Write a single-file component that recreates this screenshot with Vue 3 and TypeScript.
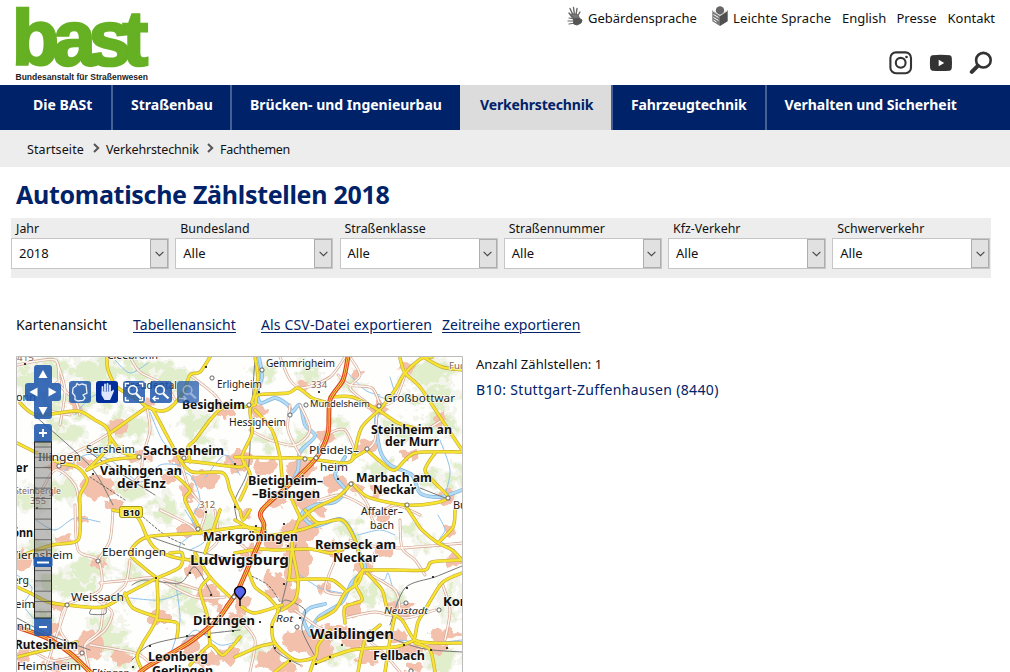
<script setup lang="ts">
type Pt = [number, number]
interface Label { t: string; x: number; y: number; w: number; s: number; b?: boolean; c?: string; i?: boolean }
interface Blob { x: number; y: number; rx: number; ry: number }

const nav = [
  { t: 'Die BASt', c: 'n1' },
  { t: 'Straßenbau', c: 'n2' },
  { t: 'Brücken- und Ingenieurbau', c: 'n3' },
  { t: 'Verkehrstechnik', c: 'n4' },
  { t: 'Fahrzeugtechnik', c: 'n5' },
  { t: 'Verhalten und Sicherheit', c: 'n6' },
]
const filters = [
  { l: 'Jahr', v: '2018' },
  { l: 'Bundesland', v: 'Alle' },
  { l: 'Straßenklasse', v: 'Alle' },
  { l: 'Straßennummer', v: 'Alle' },
  { l: 'Kfz-Verkehr', v: 'Alle' },
  { l: 'Schwerverkehr', v: 'Alle' },
]

// Smooth open curve through a list of "x,y" pairs
function curve(src: string): string {
  const p: Pt[] = src.split(' ').map((s) => s.split(',').map(Number) as Pt)
  let d = `M${p[0][0]},${p[0][1]}`
  for (let i = 0; i < p.length - 1; i++) {
    const a = p[Math.max(0, i - 1)], b = p[i], c = p[i + 1], e = p[Math.min(p.length - 1, i + 2)]
    d += `C${b[0] + (c[0] - a[0]) / 7},${b[1] + (c[1] - a[1]) / 7} ${c[0] - (e[0] - b[0]) / 7},${c[1] - (e[1] - b[1]) / 7} ${c[0]},${c[1]}`
  }
  return d
}
function blobs(src: string): Blob[] {
  return src.split(' ').map((s) => {
    const [x, y, rx, ry] = s.split(',').map(Number)
    return { x, y, rx, ry }
  })
}

const greens = blobs('50,368,26,12 95,372,24,14 140,368,30,10 80,400,30,12 130,425,22,12 60,435,26,12 175,380,20,14 195,425,16,14 100,450,14,8 30,385,16,16 30,500,14,12 65,490,16,10 130,490,12,8 165,510,18,10 215,455,10,8 265,372,10,8 310,372,12,8 350,385,10,6 430,372,26,12 440,395,20,10 415,400,14,8 395,430,16,10 440,425,18,12 430,480,12,8 375,470,12,8 270,440,10,10 300,440,8,10 340,430,10,8 60,583,24,12 90,570,20,12 75,590,20,8 105,635,22,16 75,662,14,8 45,620,12,8 120,603,10,6 180,590,12,8 195,610,14,8 125,655,12,10 165,600,12,8 240,635,12,10 260,655,14,8 370,592,13,11 410,530,10,8 425,545,10,6 452,600,14,16 445,660,18,12 395,600,10,14 340,655,12,8 350,530,12,8 215,520,14,8 130,575,12,8 40,550,14,8 455,480,10,14')
const towns = blobs('118,428,11,8 78,408,6,8 148,405,8,5 140,457,14,6 98,487,20,12 82,462,10,5 60,465,15,5 115,505,10,6 180,460,9,9 205,480,14,10 188,492,8,9 170,478,9,6 238,462,14,12 225,410,10,8 258,412,9,7 303,384,6,6 358,374,7,6 407,368,9,5 378,407,11,7 367,447,10,8 325,437,10,7 300,470,16,12 335,483,14,9 356,488,8,7 410,455,9,6 440,420,7,7 447,497,7,7 378,492,8,6 305,500,15,10 265,468,12,8 278,500,12,9 190,530,14,8 200,513,7,6 80,520,7,6 66,540,9,5 98,563,8,5 196,568,11,10 208,594,12,8 160,618,13,9 215,603,7,7 60,607,9,5 55,628,7,9 90,645,15,14 120,658,12,7 57,665,14,6 190,645,12,10 205,660,16,8 228,655,12,9 235,620,8,9 243,604,9,10 277,585,14,14 298,560,15,24 300,530,20,14 290,600,12,13 250,552,12,8 275,540,14,9 325,587,9,6 335,548,13,7 364,568,11,9 383,552,12,7 352,610,9,9 333,632,17,9 298,640,17,12 320,650,14,12 270,660,14,11 355,640,14,9 367,658,13,8 400,610,13,8 395,635,14,6 410,650,14,7 445,635,16,6 456,560,9,8 448,530,6,8 436,648,12,7 285,668,16,7 415,667,12,6 245,515,8,6 383,518,7,6 318,510,9,6 22,560,8,8 22,655,9,8')
const rivers = [
  '259,357 262,377 257,392 261,403 275,398 288,405 292,412 300,405 305,425 315,436 300,452 298,470 290,485',
  '345,457 335,475 345,490 335,502 315,505 302,514 315,526 340,519 352,532 358,550 365,568 352,582 342,602 320,616 310,630',
  '382,405 376,420 380,450 390,465 412,475 420,493 440,497 462,490',
  '310,635 303,618 310,608 325,604',
].map(curve)
const streams = [
  '115,360 130,373 148,363', '75,415 90,398 112,390 140,392', '150,412 162,440 172,450',
  '60,475 85,455 110,460 140,482 160,465 180,465', '165,470 190,475 200,500 192,520 205,540 190,550',
  '205,478 225,455 240,475', '185,510 195,530 180,545 182,560', '300,575 320,588 342,593',
  '130,598 160,600 185,592', '372,576 384,580 388,573 393,588 400,595 396,605 405,602', '440,440 450,470 445,495',
  '390,377 395,400 375,395', '345,370 365,390 380,395', '36,520 55,530 75,518 100,522', '175,580 180,620 172,650',
  '438,515 445,530 440,540 455,550', '180,650 195,630 220,645 240,640', '358,535 380,530 395,535',
  '17,575 32,588 24,605 35,620', '400,640 430,643 462,640',
].map(curve)
const minor = [
  '17,365 55,360 60,385 75,400 80,415', '130,357 140,372 165,385 175,400', '147,407 150,430 143,455 140,475 125,490',
  '60,380 45,395 50,410 70,415', '110,433 90,445 70,455', '37,500 55,470 75,485 80,510', '75,505 78,550 98,560 100,590 67,605 60,630 75,650',
  '98,560 110,540 113,510', '100,583 130,580 157,578 200,590', '97,600 112,612 105,630 85,645', '157,578 195,597 225,597', '67,605 55,640 45,672',
  '130,560 125,585 105,603 100,630 85,645 90,672', '280,357 290,380 303,388 330,377 345,357', '350,357 360,375 350,388 370,405',
  '300,405 310,430 295,445 270,440 250,430', '290,405 288,430 300,455', '320,445 330,433 345,430 355,450', '338,375 350,385 372,388 380,405',
  '405,375 395,400 378,410 375,440 367,450', '352,483 365,500 375,515 395,505 420,515', '320,500 340,495 365,507 375,525', '350,540 365,545 400,548 462,543',
  '400,520 402,548 415,560 425,575', '335,560 325,590 345,595', '367,573 395,590 400,610', '345,618 375,612 405,618 435,610', '295,610 320,628 350,635',
  '210,530 235,540 250,555 240,570', '160,510 190,525 197,533', '180,460 190,490 205,510 200,530', '90,645 120,650 140,655 160,672', '442,583 450,610 445,640', '330,640 350,630 380,650 400,672',
  '240,620 255,640 250,672', '442,420 425,430 415,428', '215,510 218,540 205,553', '60,425 65,390 58,365', '190,375 215,395 225,410', '17,640 50,660 80,655',
].map(curve)
const roads = [
  '107,357 108,370 117,387 138,400 147,407', '110,433 147,407', '147,407 153,410 165,432 173,447 180,460', '147,407 160,411 170,408 183,393 190,375 200,372 210,357',
  '20,403 37,415 77,411 95,420 107,428 110,443 102,455 87,470', '110,437 122,452 140,457', '17,443 37,453 60,463 77,467 87,480 80,495 80,510 78,540 52,545 17,557',
  '140,457 110,460 87,470', '180,460 205,463 240,467 245,462', '180,460 192,472 223,473 230,490 238,508', '190,462 188,447 195,440 210,420 222,408 235,405',
  '175,475 190,490 185,500 200,530 197,533', '400,358 405,373 420,387 442,420 462,450', '432,357 422,358 405,373 395,390 382,407 362,427 355,450 352,460',
  '425,358 442,367 462,370', '235,407 255,405 258,395 288,393 298,388 312,398 325,402', '330,397 352,397 378,410 398,423 415,428', '255,357 258,377 255,393 250,410 252,433 242,457 250,475 240,500',
  '255,410 272,430 280,457 283,483 292,500 300,517', '235,457 280,458 302,458 345,463 355,457 367,450', '367,450 382,463 395,470 415,453 462,452', '352,483 338,497 315,508 300,520',
  '352,483 368,497 405,505 435,503 448,497 435,483 425,470 435,453', '405,505 415,520 422,530 438,543 452,550 462,560', '305,510 318,523 342,520 355,540 362,567',
  '363,570 358,583 345,593 335,610 318,620', '363,570 395,570 425,570 432,562 462,560', '367,573 382,590 388,610 402,620 415,640 435,643 462,643', '363,570 355,583 362,600 345,607 345,623',
  '455,510 453,527 438,543', '235,553 260,549 275,550 310,549 332,553 350,545', '300,517 292,543 298,580 295,600 282,610', '288,580 310,579 332,580 345,590', '292,548 289,580',
  '248,570 255,587 268,597 278,610 272,625 275,643 295,660 315,657 318,645 330,630', '235,657 258,647 275,643', '315,663 352,650 395,647 415,640', '358,672 365,640 380,625', '415,637 418,622 425,610 442,583 462,573',
  '415,643 430,650 435,672', '242,607 255,613 282,605', '113,510 137,517 147,537 157,550 177,558 210,562', '265,530 240,527 197,533 147,537 130,553 143,567 157,578', '157,578 180,567 182,553 170,553',
  '195,553 210,577 230,597', '157,578 157,617 143,643 137,657 143,672', '157,578 130,592 103,607 67,605 48,602 30,593 17,587', '17,657 77,642', '157,617 133,608 125,593', '157,620 177,623 177,637',
  '210,577 200,590 207,615 210,645', '240,637 223,655 210,645 190,665', '315,657 310,672', '235,520 265,535 300,530 320,523', '250,510 243,520 240,510', '205,553 213,530 220,510', '290,660 275,672', '395,615 390,640 385,672',
].map(curve)
const motorways = ['348,357 343,380 330,400 328,433 317,457 298,477 262,510 264,525 260,540 250,563 238,590 228,605 217,620 193,640 177,650 150,665 140,672', '17,627 47,638 70,653 90,672'].map(curve)
const rails = [
  '34,415 90,466 113,505', '86,450 120,473 155,495', '255,357 251,420 248,470 235,500 237,520', '145,535 190,550 240,560', '92,608 90,614 105,614 106,608', '132,585 145,580 180,583 195,567 212,595', '282,602 290,570 296,545', '280,612 285,600 305,610 302,630 317,660', '390,625 405,588 435,577 462,566', '132,660 150,645 190,636 240,630', '272,625 275,650 300,665', '17,618 50,635 90,650', '420,488 450,500', '370,630 420,648 462,652',
].map(curve)
const dashed = ['143,517 165,535 185,545', '245,573 268,585 280,602', '90,477 125,500'].map(curve)
const rings: Pt[] = [[262,370],[212,378],[306,405],[290,415],[249,405],[379,406],[305,459],[316,458],[367,449],[351,484],[184,458],[139,457],[98,561],[67,605],[82,653],[59,466],[448,498],[407,505],[198,529],[234,597],[439,610],[406,603],[411,671],[297,627]]
const dots: Pt[] = [[25,364],[319,392],[93,474],[145,459],[338,479],[206,367],[259,392],[37,508],[206,512],[235,464],[235,507],[156,578],[190,573],[211,595],[187,636],[209,637],[233,631],[133,667],[150,646],[256,526],[284,524],[288,546],[284,584],[260,622],[272,627],[300,618],[275,648],[290,661],[316,664],[330,657],[342,645],[404,645],[407,588],[433,577],[431,650],[447,648],[411,485]]

const labels: Label[] = [
  { t: '415', x: 17, y: 361, w: 17, s: 9, c: 'brown' }, { t: 'Cleebronn', x: 107, y: 359, w: 51, s: 11 },
  { t: 'Gemmrigheim', x: 266, y: 367, w: 69, s: 10.5 }, { t: 'Fuchs', x: 449, y: 369, w: 26, s: 9, c: 'brown' },
  { t: 'Erligheim', x: 217, y: 388, w: 45, s: 10.5 }, { t: 'Freudental', x: 125, y: 389, w: 52, s: 10.5 }, { t: '334', x: 311, y: 388, w: 16, s: 9.5, c: 'brown' },
  { t: 'Mundelsheim', x: 310, y: 407, w: 60, s: 9.5 }, { t: 'Großbottwar', x: 384, y: 402, w: 71, s: 11.5 },
  { t: 'Besigheim', x: 182, y: 409, w: 63, s: 11.5, b: true }, { t: 'Hessigheim', x: 229, y: 426, w: 57, s: 10.5 },
  { t: 'Bonn', x: 9, y: 401, w: 27, s: 11 }, { t: 'Sersheim', x: 86, y: 453, w: 49, s: 10.5 },
  { t: 'Sachsenheim', x: 143, y: 455, w: 81, s: 11.5, b: true }, { t: 'Illingen', x: 38, y: 461, w: 43, s: 11 },
  { t: 'ler', x: 12, y: 472, w: 16, s: 11.5, b: true }, { t: 'Vaihingen an', x: 100, y: 475, w: 82, s: 11.5, b: true }, { t: 'der Enz', x: 117, y: 488, w: 49, s: 11.5, b: true },
  { t: 'Pleidels–', x: 309, y: 454, w: 50, s: 11 }, { t: 'heim', x: 320, y: 471, w: 28, s: 11 },
  { t: 'Steinheim an', x: 371, y: 434, w: 81, s: 11.5, b: true }, { t: 'der Murr', x: 385, y: 446, w: 54, s: 11.5, b: true },
  { t: 'Marbach am', x: 356, y: 482, w: 76, s: 11.5, b: true }, { t: 'Neckar', x: 373, y: 494, w: 43, s: 11.5, b: true },
  { t: 'Bietigheim–', x: 248, y: 485, w: 75, s: 11.5, b: true }, { t: '–Bissingen', x: 252, y: 498, w: 68, s: 11.5, b: true },
  { t: 'Steinbergle', x: 14, y: 494, w: 47, s: 8.5, c: 'brown' }, { t: '355', x: 30, y: 504, w: 16, s: 9, c: 'brown' },
  { t: '312', x: 199, y: 508, w: 16, s: 9.5, c: 'brown' }, { t: 'Burg', x: 453, y: 509, w: 25, s: 10.5 },
  { t: 'Affalter–', x: 361, y: 515, w: 42, s: 10.5 }, { t: 'bach', x: 370, y: 529, w: 24, s: 10.5 },
  { t: 'Markgröningen', x: 203, y: 541, w: 95, s: 11.5, b: true }, { t: 'Ludwigsburg', x: 190, y: 565, w: 99, s: 14, b: true },
  { t: 'Eberdingen', x: 102, y: 556, w: 64, s: 11 }, { t: 'Mönn', x: 2, y: 537, w: 31, s: 11.5, b: true },
  { t: 'Wiernsheim', x: 7, y: 559, w: 66, s: 11 }, { t: 'berg', x: 6, y: 584, w: 23, s: 10 }, { t: 'heim', x: 8, y: 608, w: 27, s: 10.5 }, { t: 'Tann', x: 5, y: 630, w: 26, s: 11 },
  { t: 'Weissach', x: 71, y: 601, w: 53, s: 11 }, { t: 'Remseck am', x: 315, y: 549, w: 81, s: 11.5, b: true }, { t: 'Neckar', x: 333, y: 562, w: 45, s: 11.5, b: true },
  { t: 'Ditzingen', x: 193, y: 625, w: 62, s: 12, b: true }, { t: 'Rot', x: 276, y: 622, w: 17, s: 9.5, i: true }, { t: 'Neustadt', x: 384, y: 614, w: 44, s: 9.5, i: true },
  { t: 'Korb', x: 443, y: 606, w: 31, s: 11.5, b: true }, { t: 'Waiblingen', x: 310, y: 639, w: 84, s: 14, b: true }, { t: 'Fellbach', x: 373, y: 660, w: 52, s: 11.5, b: true },
  { t: 'Leonberg', x: 148, y: 661, w: 60, s: 12, b: true }, { t: 'Gerlingen', x: 152, y: 675, w: 61, s: 11.5, b: true }, { t: 'Eltingen', x: 91, y: 676, w: 38, s: 9.5, i: true },
  { t: 'Rutesheim', x: 15, y: 649, w: 63, s: 11.5, b: true }, { t: 'Heimsheim', x: 17, y: 670, w: 64, s: 11 },
]
const ticks = Array.from({ length: 17 }, (_, i) => 447 + i * 10.3)
</script>

<template>
  <div class="page">
    <header class="header">
      <svg class="logo" width="142" height="85" viewBox="10 0 142 85">
        <text class="logo-word" x="12 53 88.500 122.500" y="64.500">bast</text>
        <text class="logo-sub" x="15.500" y="80" textLength="132.500" lengthAdjust="spacingAndGlyphs">Bundesanstalt für Straßenwesen</text>
      </svg>
      <div class="tools">
        <div class="service">
          <a class="geb">
            <svg width="16" height="20" viewBox="0 0 16 20" fill="none" stroke="#666" stroke-linecap="round">
              <path d="M5 11 2 7M6 9 3 2.500M7.500 9 6.500 1.500M9 9 10 2.500M10 11 13 6" stroke-width="1.400" />
              <path d="M4 8 10 8 12 11 12 14 7 14Z" fill="#777" />
              <path d="M8 13 2 12M7 15 1 15M8 17 2 18M8 14 5 10" stroke-width="1.200" />
              <path d="M7 13 12 12 15 14 14 17 10 19 7 18Z" fill="#555" stroke="#555" />
            </svg><span>Gebärdensprache</span></a>
          <a class="lei">
            <svg width="16" height="20" viewBox="0 0 16 20">
              <circle cx="8" cy="4.500" r="4.200" fill="#666" />
              <path d="M.3 4.200 8 9.200V20L.3 15.200Z" fill="#777" /><path d="M15.700 4.200 8 9.200V20l7.700-4.800Z" fill="#505050" />
              <path d="M1.500 8.500 6.500 11.500M1.500 11.500 6.500 14.500M1.500 14 4.500 16" stroke="#fff" stroke-width="1" />
              <path d="M1 5 8 9.600 15 5" stroke="#fff" fill="none" stroke-width=".8" />
            </svg><span>Leichte Sprache</span></a>
          <a class="eng">English</a><a class="pre">Presse</a><a class="kon">Kontakt</a>
        </div>
        <div class="social">
          <svg width="24" height="24" viewBox="0 0 24 24" fill="none" stroke="#333">
            <rect x="1.400" y="1.400" width="20.600" height="20.800" rx="5.500" stroke-width="2.100" /><circle cx="11.700" cy="11.800" r="4.900" stroke-width="2.100" /><circle cx="17.500" cy="6" r="1.300" fill="#333" stroke="none" />
          </svg>
          <svg width="24" height="24" viewBox="0 0 24 24"><path d="M3 4.300Q12 3.200 21 4.300Q22.700 4.800 22.800 7Q23.200 12 22.800 17Q22.600 19.400 20.800 19.700Q12 20.500 3.200 19.700Q1.300 19.300 1.100 17Q.7 12 1.100 7Q1.300 4.800 3 4.300Z" fill="#333" /><path d="M9.700 8.700v6.600l5.500-3.300Z" fill="#fff" /></svg>
          <svg width="24" height="24" viewBox="0 0 24 24" fill="none" stroke="#333"><circle cx="14.400" cy="9.200" r="7.300" stroke-width="2.600" /><path d="M8.800 14.800 2.800 20.900" stroke-width="4" stroke-linecap="round" /></svg>
        </div>
      </div>
    </header>

    <nav class="nav">
      <a v-for="n in nav" :key="n.t" :class="n.c"><span>{{ n.t }}</span></a>
    </nav>
    <div class="crumbs">
      <span class="c1">Startseite</span>
      <svg width="7" height="10" viewBox="0 0 7 10"><path d="M1 1 5.200 5 1 9" fill="none" stroke="#555" stroke-width="2" /></svg>
      <span class="c2">Verkehrstechnik</span>
      <svg width="7" height="10" viewBox="0 0 7 10"><path d="M1 1 5.200 5 1 9" fill="none" stroke="#555" stroke-width="2" /></svg>
      <span class="c3">Fachthemen</span>
    </div>

    <h1><span>Automatische Zählstellen 2018</span></h1>

    <form class="filters">
      <label v-for="f in filters" :key="f.l">
        <span class="fl">{{ f.l }}</span>
        <span class="select"><span class="val">{{ f.v }}</span>
          <span class="arrow"><svg width="9" height="6" viewBox="0 0 9 6"><path d="M.6.8 4.500 4.700 8.400.8" fill="none" stroke="#444" stroke-width="1.100" /></svg></span>
        </span>
      </label>
    </form>

    <div class="views">
      <span class="v1">Kartenansicht</span><a class="v2">Tabellenansicht</a><a class="v3">Als CSV-Datei exportieren</a><a class="v4">Zeitreihe exportieren</a>
    </div>

    <main class="main">
      <svg class="map" width="447" height="316" viewBox="16 356 447 316">
        <defs>
          <filter id="rough" x="-5%" y="-5%" width="110%" height="110%">
            <feTurbulence type="fractalNoise" baseFrequency=".08" numOctaves="3" seed="4" result="n" />
            <feDisplacementMap in="SourceGraphic" in2="n" scale="34" xChannelSelector="R" yChannelSelector="G" />
          </filter>
          <filter id="rough2" x="-5%" y="-5%" width="110%" height="110%">
            <feTurbulence type="fractalNoise" baseFrequency=".11" numOctaves="2" seed="9" result="n" />
            <feDisplacementMap in="SourceGraphic" in2="n" scale="14" xChannelSelector="R" yChannelSelector="G" />
          </filter>
        </defs>
        <rect x="16" y="356" width="447" height="316" fill="#fefefc" />
        <g filter="url(#rough)">
          <ellipse v-for="(g, i) in greens" :key="i" :cx="g.x" :cy="g.y" :rx="g.rx + 3" :ry="g.ry + 3" fill="#f3f4ec" />
          <ellipse v-for="(g, i) in greens" :key="'g' + i" :cx="g.x" :cy="g.y" :rx="g.rx * .85" :ry="g.ry * .85" fill="#e0eecb" />
        </g>
        <g filter="url(#rough2)"><ellipse v-for="(g, i) in towns" :key="i" :cx="g.x" :cy="g.y" :rx="g.rx * .93" :ry="g.ry * .93" fill="#f2c0ab" /></g>
        <g fill="none" stroke-linecap="round" stroke-linejoin="round">
          <path v-for="d in streams" :key="d" :d="d" stroke="#8ec3ee" stroke-width="1" />
          <path v-for="d in rivers" :key="d" :d="d" stroke="#7fb4dd" stroke-width="3.800" />
          <path v-for="d in rivers" :key="'i' + d" :d="d" stroke="#b5dcf5" stroke-width="2.400" />
          <path v-for="d in minor" :key="d" :d="d" stroke="#d3a593" stroke-width="2.800" />
          <path v-for="d in minor" :key="'i' + d" :d="d" stroke="#fff8f2" stroke-width="1.500" />
          <path v-for="d in rails" :key="d" :d="d" stroke="#777" stroke-width="1" />
          <path v-for="d in dashed" :key="d" :d="d" stroke="#666" stroke-width="1" stroke-dasharray="2 2" />
          <path v-for="d in roads" :key="d" :d="d" stroke="#c5a838" stroke-width="3.500" />
          <path v-for="d in roads" :key="'i' + d" :d="d" stroke="#f6e431" stroke-width="2.300" />
          <path v-for="d in motorways" :key="d" :d="d" stroke="#dc4422" stroke-width="4.800" />
          <path v-for="d in motorways" :key="'i' + d" :d="d" stroke="#f9dc4c" stroke-width="2.400" />
          <path v-for="d in motorways" :key="'m' + d" :d="d" stroke="#e5462a" stroke-width=".9" />
        </g>
        <circle v-for="(p, i) in rings" :key="i" :cx="p[0]" :cy="p[1]" r="2.100" fill="#fff" stroke="#555" stroke-width=".9" />
        <circle v-for="(p, i) in dots" :key="'d' + i" :cx="p[0]" :cy="p[1]" r="1.100" fill="#111" />
        <rect x="119.500" y="506.500" width="23" height="11" rx="2" fill="#f7e52e" stroke="#a89a20" />
        <text class="ml bold" x="123" y="515.500" font-size="8.500" textLength="17" lengthAdjust="spacingAndGlyphs">B10</text>
        <text v-for="l in labels" :key="l.t + l.x" class="ml" :class="[l.c, { bold: l.b, italic: l.i }]" :x="l.x" :y="l.y" :font-size="l.s" :textLength="l.w" lengthAdjust="spacingAndGlyphs">{{ l.t }}</text>

        <path d="M240 606V599M240 600C238 596 234.500 595 234.500 591.500A5.500 5 0 0 1 245.500 591.500C245.500 595 242 596 240 600Z" fill="#5864ee" stroke="#000" stroke-width="1.400" />

        <g fill="#1f58ae" fill-opacity=".88">
          <path d="M37 365H49Q52 365 52 368V383H58Q61 383 61 386V398Q61 401 58 401H52V416Q52 419 49 419H37Q34 419 34 416V401H28Q25 401 25 398V386Q25 383 28 383H34V368Q34 365 37 365Z" />
          <path d="M34 442V427Q34 424 37 424H49Q52 424 52 427V442Z" /><path d="M34 618H52V633Q52 636 49 636H37Q34 636 34 633Z" />
        </g>
        <g fill="#fff"><path d="M43 370 47.500 378H38.500Z" /><path d="M43 415 47.500 407H38.500Z" /><path d="M29.500 392 37.500 387.500V396.500Z" /><path d="M56.500 392 48.500 387.500V396.500Z" /></g>
        <path d="M39 433H47M43 429V437M39 627H47" stroke="#fff" stroke-width="1.800" />
        <rect x="34.500" y="442" width="17" height="176" fill="#747474" fill-opacity=".47" stroke="#222" />
        <path v-for="t in ticks" :key="t" :d="`M35 ${t}H51`" stroke="#555" stroke-width=".8" />
        <rect x="33.500" y="557" width="19" height="10" rx="2" fill="#245cae" /><path d="M37 562.500H49" stroke="#fff" stroke-width="2" />

        <g fill="#1c55ab" fill-opacity=".84">
          <rect x="69" y="381" width="22" height="22" rx="3" /><rect x="96" y="381" width="22" height="22" rx="3" fill="#002f9b" fill-opacity="1" /><rect x="123" y="381" width="22" height="22" rx="3" /><rect x="150" y="381" width="22" height="22" rx="3" /><rect x="177" y="381" width="22" height="22" rx="3" fill-opacity=".72" />
        </g>
        <path d="M77 383.500 79 385 82 384 86 385 86.500 389 87 393 83 395 85 398 83 400.500 78 401 75 399.500 75 396 72.500 393 73 388 76 386Z" fill="none" stroke="#e8f0fa" stroke-width="1.300" />
        <path d="M102.500 392.500V387M105 391V384.500M107.500 391V384M110 391.500V385.500" stroke="#dce6ff" stroke-width="1.800" stroke-linecap="round" />
        <path d="M101.500 391.500H111L113.500 389.500 114 391 111 398 110 400H104.500L101.500 395Z" fill="#dce6ff" />
        <g fill="none" stroke="#fff">
          <path d="M125.500 387V383.500H129M139 383.500H142.500V387M125.500 397V400.500H129M139 400.500H142.500V397" stroke-width="1.400" />
          <circle cx="132.800" cy="390" r="4.300" stroke-width="1.600" /><path d="M136 393.500 141 398.500" stroke-width="2.400" />
          <circle cx="160" cy="390" r="4.300" stroke-width="1.600" /><path d="M163.200 393.500 168.500 398.500" stroke-width="2.400" /><path d="M153 398.500H159M155.500 396 153 398.500 155.500 401" stroke-width="1.400" />
          <g opacity=".4"><circle cx="187.500" cy="390" r="4.300" stroke-width="1.600" /><path d="M190.700 393.500 196 398.500" stroke-width="2.400" /><path d="M179 398.500H186M183.500 396 186 398.500 183.500 401" stroke-width="1.400" /></g>
        </g>
        <path d="M16.500 672V356.500H462.500V672" fill="none" stroke="#bbb" />
      </svg>
      <section class="result">
        <p class="count"><span>Anzahl Zählstellen: 1</span></p>
        <a class="hit">B10: Stuttgart-Zuffenhausen (8440)</a>
      </section>
    </main>
  </div>
</template>

<style>
html, body { margin: 0; background: #fff; overflow: hidden; }
</style>
<style scoped>
.page { width: 1010px; height: 672px; overflow: hidden; background: #fff; color: #111; font: 13px/18px "Noto Sans", sans-serif; white-space: nowrap; display: flex; flex-direction: column; }
.header { height: 85px; flex: none; display: flex; justify-content: space-between; padding-left: 10px; box-sizing: border-box; }
.logo-word { font: bold 77px "Liberation Sans", Arial, sans-serif; fill: #65b023; stroke: #65b023; stroke-width: 2.6px; }
.logo-sub { font: bold 9px "Liberation Sans", Arial, sans-serif; fill: #222; }
.tools { width: 443px; display: flex; flex-direction: column; }
.service { display: flex; height: 30px; padding-top: 6px; box-sizing: border-box; }
.service a { display: flex; line-height: 25px; flex: none; }
.geb { width: 145px; gap: 5px; }
.lei { width: 130px; gap: 5px; letter-spacing: .13px; }
.eng { width: 54.500px; }
.pre { width: 51px; }
.social { display: flex; gap: 16px; margin: 21px 0 0 322px; }
.nav { height: 45px; flex: none; display: flex; background: #002268; color: #fff; font-weight: 700; font-size: 14px; line-height: 40px; }
.nav a { box-sizing: border-box; border-right: 2px solid #466095; flex: none; }
.nav .n1 { width: 113px; padding-left: 33px; }
.nav .n2 { width: 119px; padding-left: 18px; }
.nav .n3 { width: 228px; padding-left: 18px; border-right: 0; }
.nav .n4 { width: 153px; padding-left: 20px; background: #dcdcdc; color: #002268; letter-spacing: -.15px; }
.nav .n5 { width: 154px; padding-left: 18px; letter-spacing: -.12px; }
.nav .n6 { padding-left: 17.500px; border: 0; letter-spacing: -.05px; }
.crumbs { height: 37px; flex: none; background: #ededed; display: flex; padding-left: 27px; line-height: 39px; box-sizing: border-box; font-size: 12.500px; }
.crumbs svg { margin: 13px 6px 0 0; }
.c1 { width: 66px; letter-spacing: .1px; }
.c2 { width: 101px; letter-spacing: -.15px; }
.c3 { letter-spacing: -.3px; }
h1 { margin: 0 0 0 16px; height: 51px; flex: none; color: #002268; font-size: 25px; letter-spacing: -.3px; line-height: 54px; font-weight: 700; }
.filters { margin: 0 0 0 11px; width: 980px; height: 60px; flex: none; background: #ededed; display: flex; gap: 6.250px; }
.filters label { width: 158px; display: flex; flex-direction: column; flex: none; }
.fl { height: 20px; padding-left: 5px; line-height: 21px; font-size: 12.400px; }
.select { height: 31px; box-sizing: border-box; border: 1px solid #c6c6c6; background: #fff; display: flex; justify-content: space-between; line-height: 28px; padding-left: 7px; }
.arrow { width: 18px; height: 29px; box-sizing: border-box; background: #e1e1e1; border: 1px solid #adadad; display: flex; align-items: center; justify-content: center; }
.views { display: flex; height: 78px; flex: none; padding: 37px 0 0 16px; box-sizing: border-box; font-size: 14px; line-height: 20px; }
.views a { color: #002268; text-decoration: underline; text-underline-offset: 2px; text-decoration-thickness: 1px; }
.v1 { width: 117px; }
.v2 { margin-right: 25px; letter-spacing: .06px; }
.v3 { margin-right: 10px; letter-spacing: .16px; }
.main { display: flex; padding-left: 16px; gap: 13px; }
.map { display: block; flex: none; }
.ml { font-family: "Noto Sans", "DejaVu Sans", sans-serif; fill: #1c1c1c; stroke: #fff; stroke-opacity: .75; stroke-width: 1.6px; paint-order: stroke; }
.bold { font-weight: 700; fill: #111; }
.italic { font-style: italic; }
.brown { fill: #806358; }
.count { margin: 0 0 9px; line-height: 16px; letter-spacing: .05px; }
.hit { color: #002268; font-size: 14px; line-height: 18px; letter-spacing: .34px; }
</style>
